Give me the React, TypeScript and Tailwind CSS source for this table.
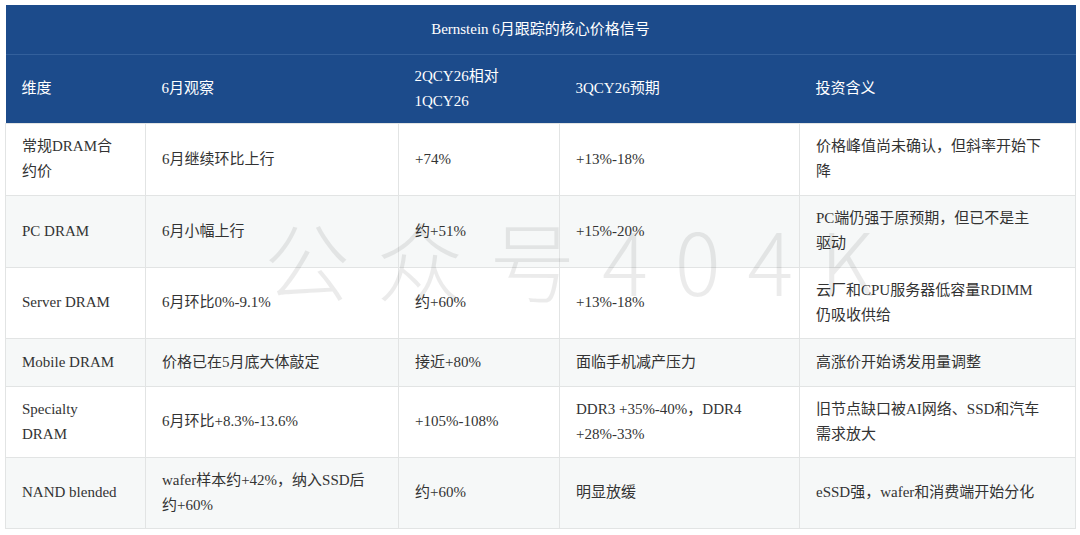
const FONT = { fontFamily: '"Liberation Serif", "Noto Sans CJK SC", serif' };

const COLS = ['w-[140px]', 'w-[253px]', 'w-[161px]', 'w-[240px]', 'w-[276px]'];

const HEAD = ['维度', '6月观察', '2QCY26相对\n1QCY26', '3QCY26预期', '投资含义'];

const ROWS: { h: string; cells: string[] }[] = [
  { h: 'h-[72px]', cells: ['常规DRAM合\n约价', '6月继续环比上行', '+74%', '+13%-18%', '价格峰值尚未确认，但斜率开始下\n降'] },
  { h: 'h-[72px]', cells: ['PC DRAM', '6月小幅上行', '约+51%', '+15%-20%', 'PC端仍强于原预期，但已不是主\n驱动'] },
  { h: 'h-[71px]', cells: ['Server DRAM', '6月环比0%-9.1%', '约+60%', '+13%-18%', '云厂和CPU服务器低容量RDIMM\n仍吸收供给'] },
  { h: 'h-[48px]', cells: ['Mobile DRAM', '价格已在5月底大体敲定', '接近+80%', '面临手机减产压力', '高涨价开始诱发用量调整'] },
  { h: 'h-[71px]', cells: ['Specialty\nDRAM', '6月环比+8.3%-13.6%', '+105%-108%', 'DDR3 +35%-40%，DDR4\n+28%-33%', '旧节点缺口被AI网络、SSD和汽车\n需求放大'] },
  { h: 'h-[71px]', cells: ['NAND blended', 'wafer样本约+42%，纳入SSD后\n约+60%', '约+60%', '明显放缓', 'eSSD强，wafer和消费端开始分化'] },
];

export default function App() {
  return (
    <div className="w-[1080px] h-[535px] bg-white p-[5px] relative overflow-hidden" style={FONT}>
      <table className="table-fixed border-collapse w-[1070px] text-[15px] leading-[25px]">
        <colgroup>
          {COLS.map((c, i) => (
            <col key={i} className={c} />
          ))}
        </colgroup>
        <thead>
          <tr className="h-[49px] bg-[#1c4b8b] border-b border-[#33609c]">
            <th colSpan={5} className="text-center font-normal text-white text-[15px]">
              Bernstein 6月跟踪的核心价格信号
            </th>
          </tr>
          <tr className="h-[69px] bg-[#1c4b8b]">
            {HEAD.map((t, i) => (
              <th key={i} className="text-left font-normal text-white pl-[16px] pr-2 whitespace-pre-line align-middle">
                {t}
              </th>
            ))}
          </tr>
        </thead>
        <tbody>
          {ROWS.map((r, ri) => (
            <tr key={ri} className={`${r.h} ${ri % 2 === 1 ? 'bg-[#f6f8f8]' : 'bg-white'}`}>
              {r.cells.map((c, ci) => (
                <td
                  key={ci}
                  className="border border-[#e2e4e4] pl-[16px] pr-2 text-[#333333] whitespace-pre-line align-middle"
                >
                  {c}
                </td>
              ))}
            </tr>
          ))}
        </tbody>
      </table>

      {/* watermark */}
      <div
        className="absolute left-[264px] top-[216px] pointer-events-none select-none text-[86px] leading-none font-light tracking-[0.31em] text-black/[0.08] whitespace-nowrap"
        style={{ fontFamily: '"Noto Sans CJK SC", "Noto Sans", sans-serif' }}
      >
        公众号404K
      </div>
    </div>
  );
}
